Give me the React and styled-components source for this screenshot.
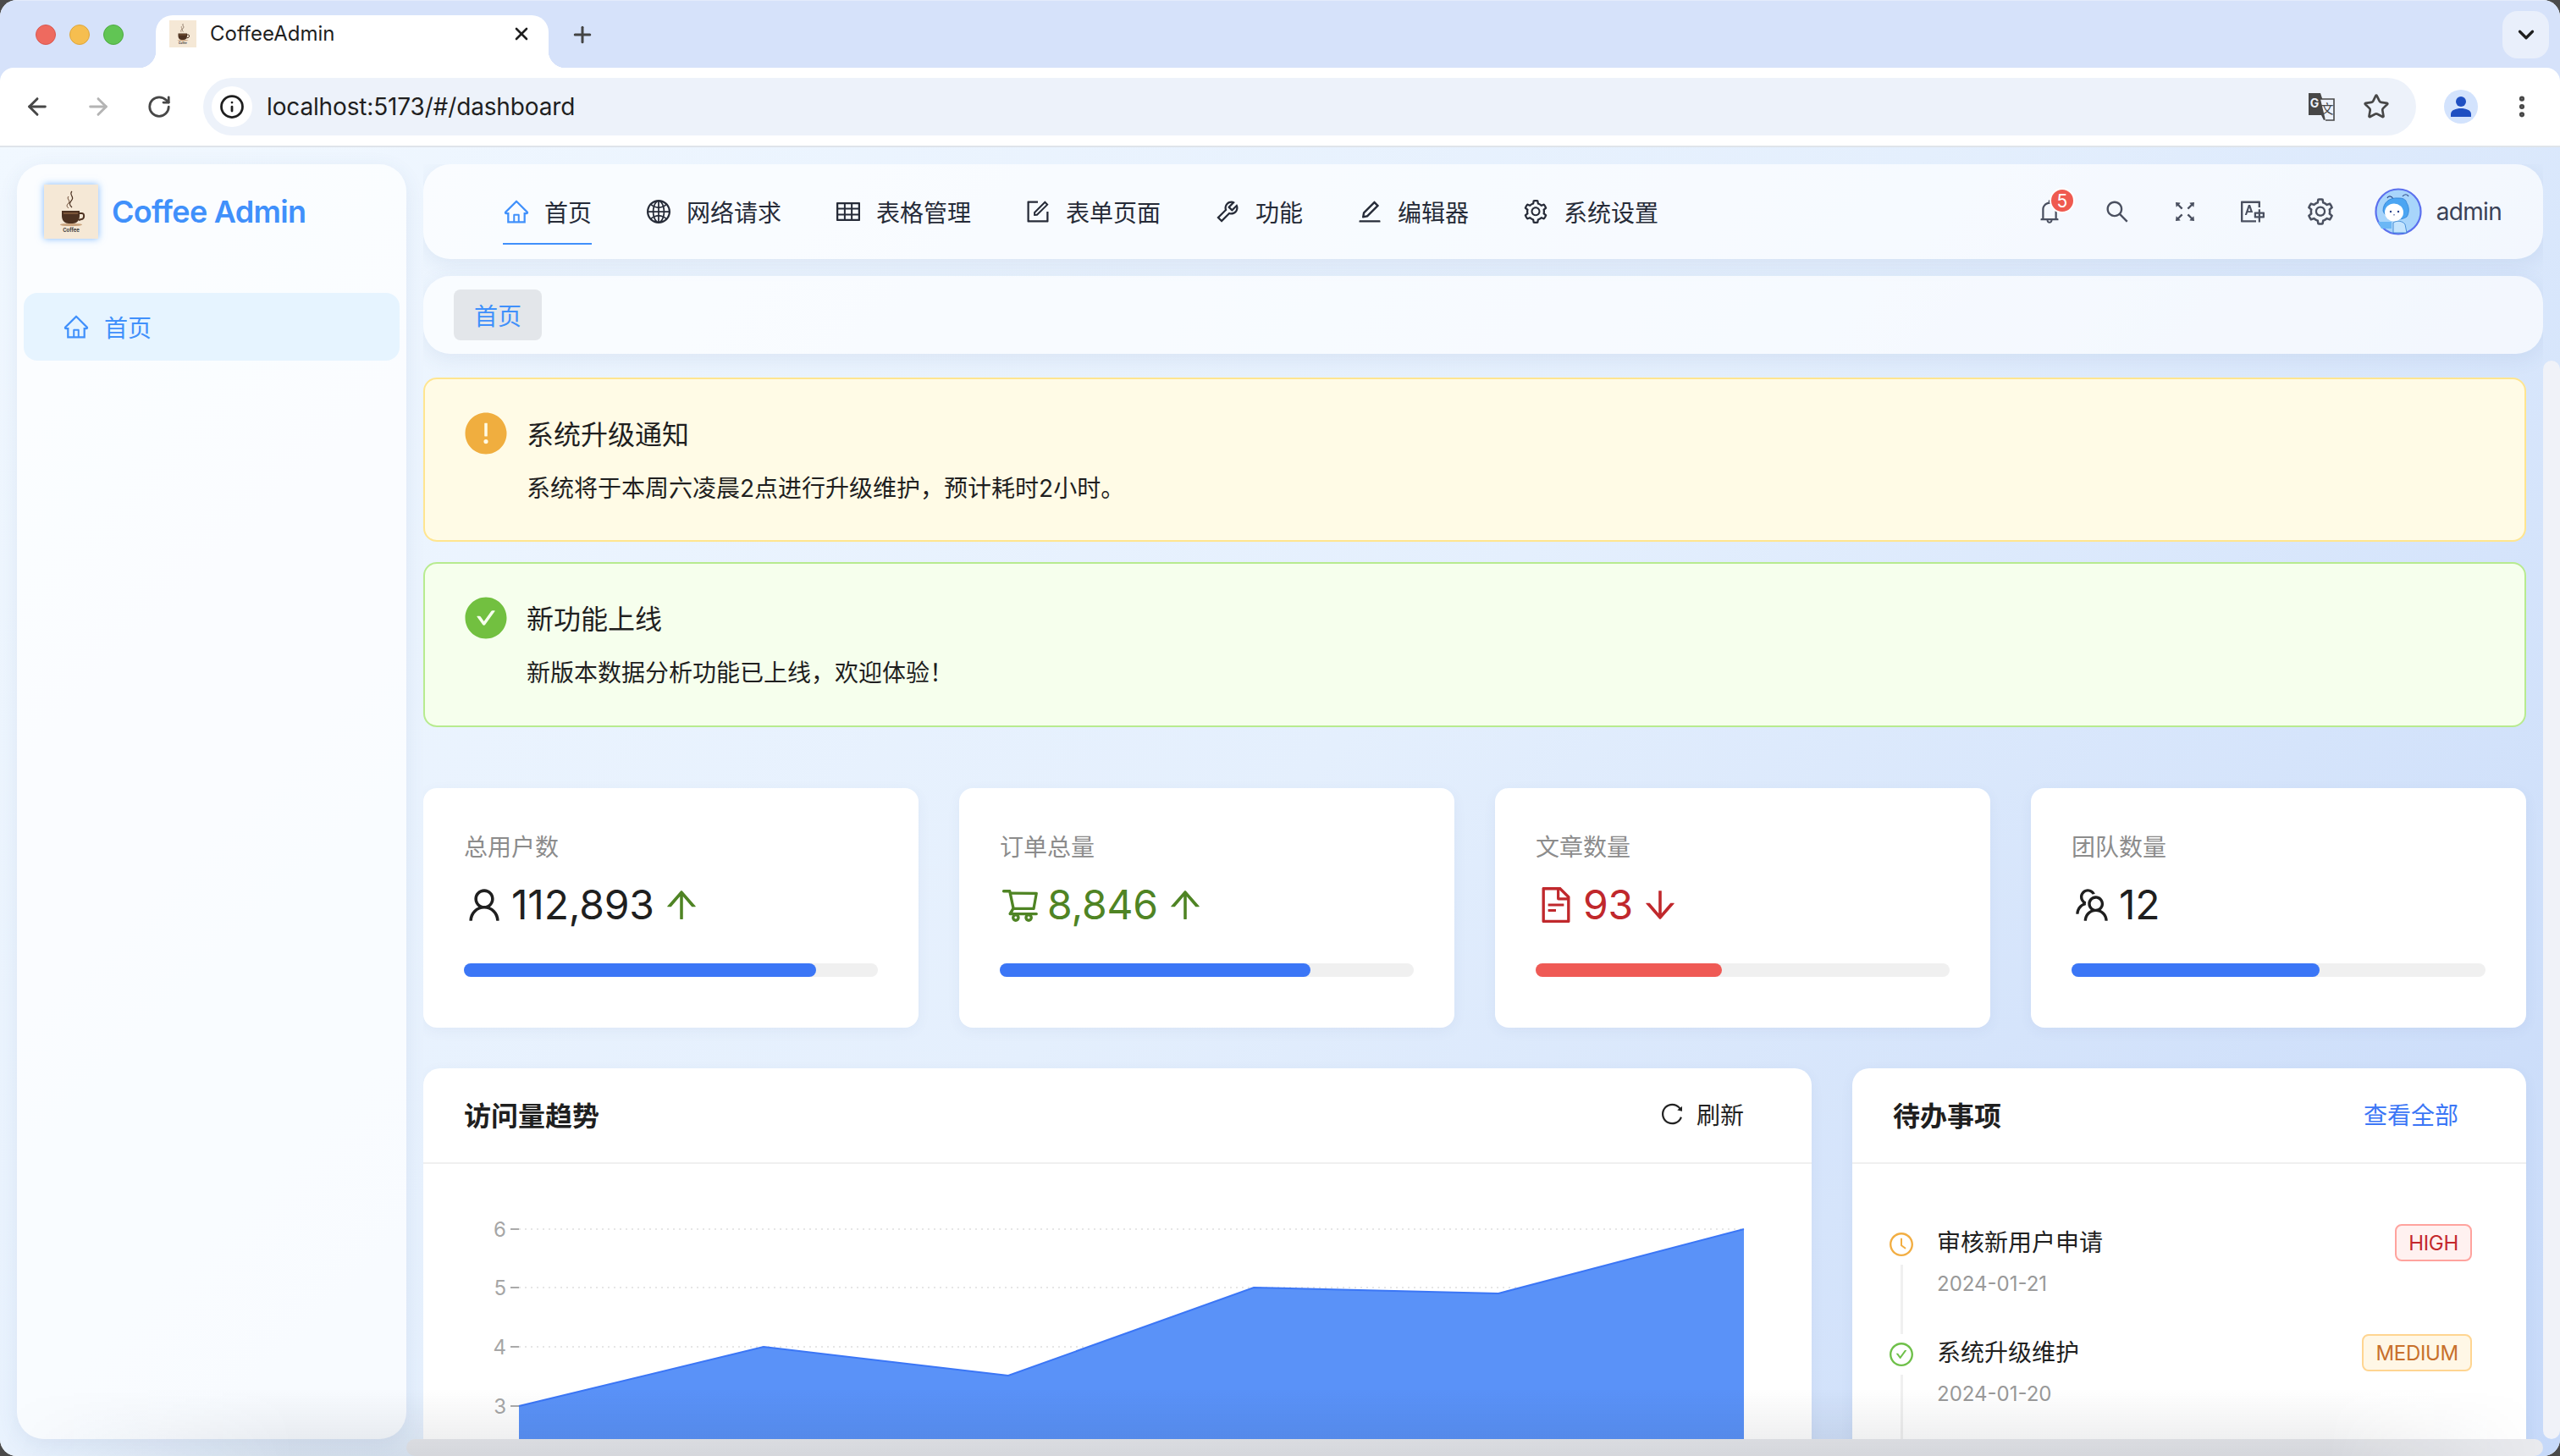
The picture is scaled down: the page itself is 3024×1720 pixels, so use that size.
import React from 'react'
import styled, { createGlobalStyle } from 'styled-components'
import { ArrowLeft, ArrowRight, RotateCw, Info, Star, Plus, X, ChevronDown, MoreVertical } from 'lucide-react'
import {
  AiOutlineHome,
  AiOutlineGlobal,
  AiOutlineTable,
  AiOutlineForm,
  AiOutlineTool,
  AiOutlineEdit,
  AiOutlineSetting,
  AiOutlineBell,
  AiOutlineSearch,
  AiOutlineFullscreen,
  AiOutlineTranslation,
  AiOutlineUser,
  AiOutlineShoppingCart,
  AiOutlineFileText,
  AiOutlineTeam,
  AiOutlineArrowUp,
  AiOutlineArrowDown,
  AiOutlineReload,
  AiOutlineClockCircle,
  AiOutlineCheckCircle,
  AiFillExclamationCircle,
  AiFillCheckCircle,
} from 'react-icons/ai'

const GlobalStyle = createGlobalStyle`
  html, body {
    margin: 0;
    padding: 0;
    background: #4a4a4a;
    overflow: hidden;
  }
  * {
    box-sizing: border-box;
  }
  body {
    font-family: Inter, "Noto Sans CJK SC", sans-serif;
    color: #1f1f1f;
  }
`

const Window = styled.div`
  position: relative;
  width: 3024px;
  height: 1720px;
  border-radius: 20px;
  overflow: hidden;
  display: flex;
  flex-direction: column;
  background: #fff;
`

const TabStrip = styled.div`
  height: 80px;
  flex: none;
  display: flex;
  align-items: center;
  padding: 0 13px 0 42px;
  background: #d6e2fa;
  border-top: 1px solid #e4ebfb;
`

const Lights = styled.div`
  display: flex;
  gap: 16px;
`

const Light = styled.span`
  width: 24px;
  height: 24px;
  border-radius: 50%;
  background: ${(p) => p.$color};
  border: 1px solid ${(p) => p.$edge};
`

const Tab = styled.div`
  position: relative;
  align-self: flex-end;
  width: 464px;
  height: 62px;
  margin-left: 38px;
  padding: 6px 20px 0 16px;
  display: flex;
  align-items: flex-start;
  gap: 16px;
  background: #fff;
  border-radius: 20px 20px 0 0;

  &::before,
  &::after {
    content: '';
    position: absolute;
    bottom: 0;
    width: 20px;
    height: 20px;
  }
  &::before {
    left: -20px;
    background: radial-gradient(circle at 0 0, #d6e2fa 20px, #fff 20.5px);
  }
  &::after {
    right: -20px;
    background: radial-gradient(circle at 100% 0, #d6e2fa 20px, #fff 20.5px);
  }
`

const TabTitle = styled.span`
  flex: 1;
  font-size: 24px;
  line-height: 32px;
  color: #1f1f1f;
`

const TabClose = styled.span`
  display: flex;
  height: 32px;
  align-items: center;
  color: #1f1f1f;
`

const NewTab = styled.span`
  display: flex;
  width: 48px;
  justify-content: center;
  margin-left: 16px;
  color: #444;
`

const TabSearch = styled.span`
  margin-left: auto;
  width: 55px;
  height: 56px;
  border-radius: 18px;
  background: #e9effb;
  display: flex;
  align-items: center;
  justify-content: center;
  color: #1f1f1f;
`

const Toolbar = styled.div`
  position: relative;
  height: 94px;
  flex: none;
  display: flex;
  align-items: flex-start;
  padding: 12px 20px 0;
  background: #d6e2fa;

  &::before {
    content: '';
    position: absolute;
    inset: 0;
    background: #fff;
    border-radius: 16px 16px 0 0;
    border-bottom: 2px solid #dfe4ea;
  }
`

const ToolButton = styled.span`
  position: relative;
  width: 48px;
  height: 68px;
  flex: none;
  margin-right: ${(p) => p.$gap || 24}px;
  display: flex;
  align-items: center;
  justify-content: center;
  color: ${(p) => p.$color || '#474747'};
`

const AddressBar = styled.div`
  position: relative;
  flex: 1;
  height: 68px;
  margin: 0 33px 0 4px;
  padding: 0 23px 0 10px;
  border-radius: 34px;
  background: #edf2fa;
  display: flex;
  align-items: center;
`

const SiteInfo = styled.span`
  width: 48px;
  height: 48px;
  border-radius: 50%;
  background: #fff;
  display: flex;
  align-items: center;
  justify-content: center;
  color: #1f1f1f;
`

const Url = styled.span`
  flex: 1;
  margin-left: 17px;
  font-size: 28px;
  letter-spacing: -0.15px;
  color: #1f1f1f;
`

const AddressIcon = styled.span`
  width: 48px;
  display: flex;
  justify-content: center;
  margin-left: 17px;
  color: #474747;
`

const Profile = styled.span`
  position: relative;
  width: 40px;
  height: 40px;
  margin: 14px 28px 0 0;
  border-radius: 50%;
  background: #d3e3fd;
  display: flex;
  align-items: center;
  justify-content: center;
  flex: none;
`

const Body = styled.div`
  flex: 1;
  min-height: 0;
  display: flex;
  gap: 20px;
  padding: 20px;
  background: linear-gradient(135deg, #f1f8ff 0%, #e4effd 50%, #c6d9f9 100%);
`

const Sidebar = styled.aside`
  width: 460px;
  flex: none;
  border-radius: 32px;
  background: rgba(255, 255, 255, 0.72);
  box-shadow: 0 6px 24px rgba(60, 90, 140, 0.09);
`

const LogoRow = styled.div`
  display: flex;
  align-items: center;
  gap: 16px;
  padding: 24px 32px;
`

const LogoBox = styled.div`
  width: 64px;
  height: 64px;
  flex: none;
  background: #f5e8d6;
  box-shadow: 0 0 8px rgba(64, 150, 255, 0.65);
`

const LogoText = styled.span`
  font-size: 36px;
  font-weight: 600;
  letter-spacing: -0.7px;
  color: #4090fb;
`

const SideMenu = styled.nav`
  margin-top: 40px;
  padding: 0 8px;
`

const SideItem = styled.div`
  height: 80px;
  padding-left: 46px;
  display: flex;
  align-items: center;
  gap: 17px;
  border-radius: 16px;
  background: #e6f4ff;
  color: #4090fb;
  font-size: 28px;
`

const Main = styled.main`
  flex: 1;
  min-width: 0;
  display: flex;
  flex-direction: column;
  overflow: hidden;
`

const Header = styled.header`
  height: 112px;
  flex: none;
  display: flex;
  align-items: flex-start;
  justify-content: space-between;
  padding: 0 49px 0 94px;
  border-radius: 32px;
  background: rgba(255, 255, 255, 0.68);
  box-shadow: 0 6px 24px rgba(60, 90, 140, 0.09);
`

const Nav = styled.nav`
  display: flex;
  gap: 63px;
  margin-top: 17px;
`

const NavItem = styled.div`
  height: 78px;
  padding-top: 1px;
  display: flex;
  align-items: center;
  gap: 17px;
  font-size: 28px;
  color: #262b38;
  border-bottom: 2px solid ${(p) => (p.$active ? '#4090fb' : 'transparent')};

  svg {
    color: ${(p) => (p.$active ? '#4090fb' : '#262b38')};
  }
`

const HeaderRight = styled.div`
  height: 100%;
  display: flex;
  align-items: center;
  color: #4a5060;
`

const HeaderIcon = styled.span`
  position: relative;
  width: 36px;
  height: 36px;
  margin-right: ${(p) => p.$gap || 44}px;
  display: flex;
  align-items: center;
  justify-content: center;
`

const Badge = styled.span`
  position: absolute;
  left: 18px;
  top: -10px;
  width: 30px;
  height: 30px;
  border-radius: 50%;
  background: #ef5a50;
  border: 2px solid #fff;
  color: #fff;
  font-size: 21px;
  display: flex;
  align-items: center;
  justify-content: center;
`

const AvatarBox = styled.span`
  width: 56px;
  height: 56px;
  flex: none;
  margin-right: 17px;
`

const UserName = styled.span`
  font-size: 28px;
  letter-spacing: -0.7px;
  color: #3a4256;
`

const Crumbs = styled.div`
  height: 92px;
  flex: none;
  margin-top: 20px;
  padding: 16px 36px;
  border-radius: 32px;
  background: rgba(255, 255, 255, 0.68);
  box-shadow: 0 6px 24px rgba(60, 90, 140, 0.09);
`

const CrumbTag = styled.span`
  display: inline-flex;
  align-items: center;
  justify-content: center;
  width: 104px;
  height: 60px;
  border-radius: 8px;
  background: #e3e6ea;
  color: #4090fb;
  font-size: 28px;
`

const Content = styled.div`
  padding: 28px 20px 0 0;
  display: flex;
  flex-direction: column;
`

const Alert = styled.div`
  display: flex;
  gap: 24px;
  height: ${(p) => p.$height}px;
  margin-bottom: 24px;
  padding: 40px 48px;
  border-radius: 16px;
  border: 2px solid ${(p) => p.$border};
  background: ${(p) => p.$bg};
`

const AlertIcon = styled.span`
  width: 48px;
  height: 48px;
  flex: none;
  position: relative;
  color: ${(p) => p.$color};
  svg {
    display: block;
    margin: -4px;
  }
`

const AlertTitle = styled.div`
  font-size: 32px;
  line-height: 52px;
  margin-bottom: 15px;
  color: #1f1f1f;
`

const AlertText = styled.div`
  font-size: 28px;
  line-height: 44px;
  color: #1f1f1f;
`

const StatGrid = styled.div`
  display: grid;
  grid-template-columns: repeat(4, 1fr);
  gap: 48px;
  margin-top: 48px;
`

const StatCard = styled.div`
  height: 283px;
  padding: 48px;
  border-radius: 16px;
  background: #fff;
  box-shadow: 0 4px 16px rgba(60, 90, 140, 0.06);
`

const StatLabel = styled.div`
  font-size: 28px;
  line-height: 44px;
  color: #8c8c8c;
`

const StatValue = styled.div`
  height: 72px;
  margin-top: 10px;
  display: flex;
  align-items: center;
  gap: 8px;
  font-size: 48px;
  line-height: 72px;
  letter-spacing: -0.2px;
  color: ${(p) => p.$color};
`

const Track = styled.div`
  height: 16px;
  margin-top: 33px;
  border-radius: 8px;
  background: #f0f0f0;
`

const Fill = styled.div`
  height: 100%;
  border-radius: 8px;
  background: ${(p) => p.$color};
`

const PanelGrid = styled.div`
  display: grid;
  grid-template-columns: 1640px 796px;
  gap: 48px;
  margin-top: 48px;
`

const Panel = styled.section`
  height: 600px;
  border-radius: 20px 20px 0 0;
  background: #fff;
  box-shadow: 0 4px 16px rgba(60, 90, 140, 0.06);
`

const PanelHead = styled.div`
  height: 113px;
  padding: 0 80px 3px 48px;
  display: flex;
  align-items: center;
  justify-content: space-between;
  border-bottom: 2px solid #f0f0f0;
`

const PanelTitle = styled.h3`
  margin: 0;
  font-size: 32px;
  font-weight: 600;
  color: #1f1f1f;
`

const PanelAction = styled.span`
  display: flex;
  align-items: center;
  gap: 14px;
  font-size: 28px;
  color: ${(p) => p.$color};
`

const ChartBody = styled.div`
  padding: 0 48px;
`

const TodoBody = styled.div`
  padding: 71px 64px 0 44px;
`

const TodoItem = styled.div`
  height: 130px;
  display: flex;
  gap: 28px;
`

const TodoMark = styled.div`
  width: 28px;
  flex: none;
  padding-top: 10px;
  display: flex;
  flex-direction: column;
  align-items: center;
  color: ${(p) => p.$color};

  svg {
    display: block;
    flex: none;
    margin: -2px;
  }
`

const TodoLine = styled.div`
  width: 3px;
  flex: 1;
  margin-top: 10px;
  background: #f0f0f0;
`

const TodoMain = styled.div`
  flex: 1;
`

const TodoTitle = styled.div`
  font-size: 28px;
  line-height: 44px;
  color: #1f1f1f;
`

const TodoDate = styled.div`
  margin-top: 9px;
  font-size: 24px;
  line-height: 36px;
  color: #999;
`

const Priority = styled.span`
  height: 44px;
  padding: 0 14px;
  display: flex;
  align-items: center;
  flex: none;
  border-radius: 8px;
  font-size: 24px;
  letter-spacing: -0.3px;
  border: 2px solid ${(p) => p.$border};
  background: ${(p) => p.$bg};
  color: ${(p) => p.$color};
`

const ScrollY = styled.div`
  position: absolute;
  top: 426px;
  right: 0;
  bottom: 20px;
  width: 20px;
  border-radius: 10px;
  background: #f0f2f8;
`

const ScrollX = styled.div`
  position: absolute;
  left: 480px;
  right: 20px;
  bottom: 0;
  height: 20px;
  border-radius: 10px;
  background: #e9eaee;
`

const BottomShade = styled.div`
  position: absolute;
  left: 0;
  right: 0;
  bottom: 0;
  height: 80px;
  pointer-events: none;
  background: linear-gradient(to top, rgba(20, 30, 40, 0.09), rgba(20, 30, 40, 0));
  mask-image: linear-gradient(to right, transparent 0, #000 350px, #000 2750px, transparent 3000px);
`

function CoffeeLogo({ size }) {
  return (
    <svg width={size} height={size} viewBox="0 0 64 64">
      <rect width="64" height="64" fill="#f5e8d6" />
      <path d="M33 8c-4 4 3 6 0 10s-4 5 0 9" fill="none" stroke="#4a3020" strokeWidth="1.2" />
      <path d="M29 14c-3 3 3 5 0 8s-2 4 0 6" fill="none" stroke="#6b4a34" strokeWidth="1" />
      <path d="M21 31h21v6c0 6-4 9-8 9h-5c-4 0-8-3-8-9z" fill="#4d3221" />
      <path d="M23 33h17v2H23z" fill="#7c5639" />
      <path d="M42 34h3c3 0 3 7-1 7l-3 1" fill="none" stroke="#4d3221" strokeWidth="2" />
      <ellipse cx="32" cy="47.5" rx="13" ry="1.6" fill="#c9a27c" />
      <text x="32" y="56" textAnchor="middle" fontSize="6" fontWeight="700" fontFamily="Inter, sans-serif" fill="#3a3a3a">
        Coffee
      </text>
    </svg>
  )
}

function AvatarArt() {
  return (
    <svg width="56" height="56" viewBox="0 0 56 56">
      <circle cx="28" cy="28" r="26.5" fill="#a8d5fb" stroke="#5b70ee" strokeWidth="2.2" />
      <path d="M15 12c1-3 5-3 7 1M33 10c2-3 6-3 7 0" fill="none" stroke="#33508e" strokeWidth="1.2" />
      <path d="M10 27c0-10 8-16 18-15 5 0 9 1 10 6 3 4 3 12 0 16-6 5-24 5-28-7z" fill="#4ba5f2" stroke="#2f7fd1" strokeWidth="0.8" />
      <ellipse cx="23" cy="29" rx="11" ry="10.5" fill="#fff" />
      <circle cx="19" cy="28" r="1.2" fill="#27408b" />
      <circle cx="28" cy="28" r="1.2" fill="#27408b" />
      <path d="M23 31v1.5" stroke="#27408b" strokeWidth="1" />
      <path d="M22 41c5-3 11-2 14 2l2 10H22z" fill="#c4e4fd" stroke="#2f7fd1" strokeWidth="0.8" />
      <path d="M4 40h16v8H8z" fill="#6bb7f5" />
    </svg>
  )
}

function TranslateMark() {
  return (
    <svg width="34" height="34" viewBox="0 0 34 34">
      <path d="M2 1h14l10 30-6 2-3-6H2z" fill="#474747" />
      <text x="9" y="18" textAnchor="middle" fontSize="14" fontWeight="700" fontFamily="Inter, sans-serif" fill="#edf2fa">
        G
      </text>
      <path d="M16 8h16v25H22" fill="#edf2fa" stroke="#474747" strokeWidth="1.6" />
      <text x="24" y="25" textAnchor="middle" fontSize="15" fontFamily="Noto Sans CJK SC, sans-serif" fill="#474747">
        文
      </text>
    </svg>
  )
}

function ProfileMark() {
  return (
    <svg width="28" height="28" viewBox="0 0 28 28">
      <circle cx="14" cy="8" r="6" fill="#1f4fc2" />
      <path d="M2 26v-3c0-5 6-7 12-7s12 2 12 7v3z" fill="#1f4fc2" />
    </svg>
  )
}

function TrendChart() {
  const ticks = [
    { label: '6', y: 77 },
    { label: '5', y: 146 },
    { label: '4', y: 216 },
    { label: '3', y: 286 },
  ]
  const line = '65,286 354,216 643,250 933,146 1222,153 1512,77'
  return (
    <svg width="1544" height="485" viewBox="0 0 1544 485">
      {ticks.map((t) => (
        <g key={t.label}>
          <line x1="65" x2="1512" y1={t.y} y2={t.y} stroke="#e6e6e6" strokeWidth="2" strokeDasharray="2 5" />
          <line x1="55" x2="65" y1={t.y} y2={t.y} stroke="#aaa" strokeWidth="2" />
          <text x="50" y={t.y + 9} textAnchor="end" fontSize="24" fontFamily="Inter, sans-serif" fill="#a6a6a6">
            {t.label}
          </text>
        </g>
      ))}
      <polygon points={`${line} 1512,485 65,485`} fill="#5a92f8" />
      <polyline points={line} fill="none" stroke="#3b76f6" strokeWidth="2" />
    </svg>
  )
}

const navItems = [
  { label: '首页', icon: AiOutlineHome, active: true },
  { label: '网络请求', icon: AiOutlineGlobal },
  { label: '表格管理', icon: AiOutlineTable },
  { label: '表单页面', icon: AiOutlineForm },
  { label: '功能', icon: AiOutlineTool },
  { label: '编辑器', icon: AiOutlineEdit },
  { label: '系统设置', icon: AiOutlineSetting },
]

const stats = [
  { label: '总用户数', value: '112,893', icon: AiOutlineUser, color: '#1f1f1f', trend: AiOutlineArrowUp, trendColor: '#4f8424', pct: 85, bar: '#3b76f6' },
  { label: '订单总量', value: '8,846', icon: AiOutlineShoppingCart, color: '#4f8424', trend: AiOutlineArrowUp, trendColor: '#4f8424', pct: 75, bar: '#3b76f6' },
  { label: '文章数量', value: '93', icon: AiOutlineFileText, color: '#c0282c', trend: AiOutlineArrowDown, trendColor: '#c0282c', pct: 45, bar: '#ef5a55' },
  { label: '团队数量', value: '12', icon: AiOutlineTeam, color: '#1f1f1f', pct: 60, bar: '#3b76f6' },
]

const todos = [
  {
    title: '审核新用户申请',
    date: '2024-01-21',
    icon: AiOutlineClockCircle,
    color: '#f2ae43',
    level: 'HIGH',
    tag: { $border: '#ffa39e', $bg: '#fff1f0', $color: '#c4282d' },
  },
  {
    title: '系统升级维护',
    date: '2024-01-20',
    icon: AiOutlineCheckCircle,
    color: '#6fc04a',
    level: 'MEDIUM',
    tag: { $border: '#ffd591', $bg: '#fff7e6', $color: '#c8702b' },
  },
]

export default function App() {
  return (
    <Window>
      <GlobalStyle />
      <TabStrip>
        <Lights>
          <Light $color="#ee6a5f" $edge="#d9584f" />
          <Light $color="#f6be4f" $edge="#dea63c" />
          <Light $color="#61c554" $edge="#4eab42" />
        </Lights>
        <Tab>
          <CoffeeLogo size={32} />
          <TabTitle>CoffeeAdmin</TabTitle>
          <TabClose>
            <X size={24} strokeWidth={2.6} />
          </TabClose>
        </Tab>
        <NewTab>
          <Plus size={30} strokeWidth={2.4} />
        </NewTab>
        <TabSearch>
          <ChevronDown size={30} strokeWidth={2.6} />
        </TabSearch>
      </TabStrip>

      <Toolbar>
        <ToolButton>
          <ArrowLeft size={32} strokeWidth={2.2} />
        </ToolButton>
        <ToolButton $color="#b4b4b4">
          <ArrowRight size={32} strokeWidth={2.2} />
        </ToolButton>
        <ToolButton>
          <RotateCw size={30} strokeWidth={2.2} />
        </ToolButton>
        <AddressBar>
          <SiteInfo>
            <Info size={30} strokeWidth={2.2} />
          </SiteInfo>
          <Url>localhost:5173/#/dashboard</Url>
          <AddressIcon>
            <TranslateMark />
          </AddressIcon>
          <AddressIcon>
            <Star size={32} strokeWidth={2} />
          </AddressIcon>
        </AddressBar>
        <Profile>
          <ProfileMark />
        </Profile>
        <ToolButton $gap={1}>
          <MoreVertical size={32} strokeWidth={2.6} />
        </ToolButton>
      </Toolbar>

      <Body>
        <Sidebar>
          <LogoRow>
            <LogoBox>
              <CoffeeLogo size={64} />
            </LogoBox>
            <LogoText>Coffee Admin</LogoText>
          </LogoRow>
          <SideMenu>
            <SideItem>
              <AiOutlineHome size={32} />
              首页
            </SideItem>
          </SideMenu>
        </Sidebar>

        <Main>
          <Header>
            <Nav>
              {navItems.map((item) => (
                <NavItem key={item.label} $active={item.active}>
                  <item.icon size={32} />
                  {item.label}
                </NavItem>
              ))}
            </Nav>
            <HeaderRight>
              <HeaderIcon>
                <AiOutlineBell size={32} />
                <Badge>5</Badge>
              </HeaderIcon>
              <HeaderIcon>
                <AiOutlineSearch size={32} />
              </HeaderIcon>
              <HeaderIcon>
                <AiOutlineFullscreen size={32} />
              </HeaderIcon>
              <HeaderIcon>
                <AiOutlineTranslation size={32} />
              </HeaderIcon>
              <HeaderIcon $gap={46}>
                <AiOutlineSetting size={40} />
              </HeaderIcon>
              <AvatarBox>
                <AvatarArt />
              </AvatarBox>
              <UserName>admin</UserName>
            </HeaderRight>
          </Header>

          <Crumbs>
            <CrumbTag>首页</CrumbTag>
          </Crumbs>

          <Content>
            <Alert $border="#ffe58f" $bg="#fffbe6" $height={194}>
              <AlertIcon $color="#f0ae3f">
                <AiFillExclamationCircle size={56} />
              </AlertIcon>
              <div>
                <AlertTitle>系统升级通知</AlertTitle>
                <AlertText>{'系统将于本周六凌晨2点进行升级维护\uFF0C预计耗时2小时。'}</AlertText>
              </div>
            </Alert>
            <Alert $border="#b7eb8f" $bg="#f6ffed" $height={195}>
              <AlertIcon $color="#72c040">
                <AiFillCheckCircle size={56} />
              </AlertIcon>
              <div>
                <AlertTitle>新功能上线</AlertTitle>
                <AlertText>{'新版本数据分析功能已上线\uFF0C欢迎体验\uFF01'}</AlertText>
              </div>
            </Alert>

            <StatGrid>
              {stats.map((s) => (
                <StatCard key={s.label}>
                  <StatLabel>{s.label}</StatLabel>
                  <StatValue $color={s.color}>
                    <s.icon size={48} />
                    {s.value}
                    {s.trend && <s.trend size={48} color={s.trendColor} />}
                  </StatValue>
                  <Track>
                    <Fill $color={s.bar} style={{ width: `${s.pct}%` }} />
                  </Track>
                </StatCard>
              ))}
            </StatGrid>

            <PanelGrid>
              <Panel>
                <PanelHead>
                  <PanelTitle>访问量趋势</PanelTitle>
                  <PanelAction $color="#222">
                    <AiOutlineReload size={30} />
                    刷新
                  </PanelAction>
                </PanelHead>
                <ChartBody>
                  <TrendChart />
                </ChartBody>
              </Panel>
              <Panel>
                <PanelHead>
                  <PanelTitle>待办事项</PanelTitle>
                  <PanelAction $color="#3b76f6">查看全部</PanelAction>
                </PanelHead>
                <TodoBody>
                  {todos.map((t) => (
                    <TodoItem key={t.title}>
                      <TodoMark $color={t.color}>
                        <t.icon size={32} />
                        <TodoLine />
                      </TodoMark>
                      <TodoMain>
                        <TodoTitle>{t.title}</TodoTitle>
                        <TodoDate>{t.date}</TodoDate>
                      </TodoMain>
                      <Priority {...t.tag}>{t.level}</Priority>
                    </TodoItem>
                  ))}
                </TodoBody>
              </Panel>
            </PanelGrid>
          </Content>
        </Main>
      </Body>

      <ScrollY />
      <ScrollX />
      <BottomShade />
    </Window>
  )
}
